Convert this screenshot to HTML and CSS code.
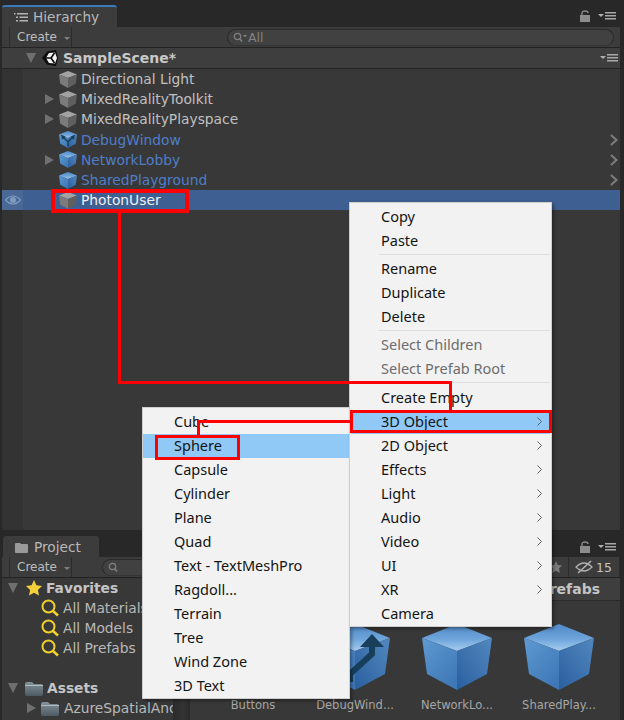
FILE: index.html
```html
<!DOCTYPE html>
<html lang="en">
<head>
<meta charset="utf-8">
<title>Unity Hierarchy context menu</title>
<link rel="stylesheet" href="styles.css">
</head>
<body>
<svg class="defs" aria-hidden="true">
  <defs>
    <linearGradient id="bt" x1="0.5" y1="1" x2="0.5" y2="0"><stop offset="0" stop-color="#a5cdf0"/><stop offset="0.45" stop-color="#6ea4da"/><stop offset="1" stop-color="#4f8ac8"/></linearGradient>
    <linearGradient id="bl" x1="0" y1="0" x2="0.7" y2="1"><stop offset="0" stop-color="#5f9ad3"/><stop offset="1" stop-color="#3f78b6"/></linearGradient>
    <linearGradient id="br" x1="0" y1="1" x2="1" y2="0"><stop offset="0" stop-color="#2a5f9f"/><stop offset="1" stop-color="#5288bf"/></linearGradient>
    <linearGradient id="fd" x1="0" y1="0" x2="0" y2="1"><stop offset="0" stop-color="#84929c"/><stop offset="1" stop-color="#4d5a64"/></linearGradient>
    <symbol id="cube-blue" viewBox="0 0 70 66">
      <polygon points="35,0 70,14 35,27 0,14" fill="url(#bt)"/>
      <polygon points="0,14 35,27 35,66 5,50" fill="url(#bl)"/>
      <polygon points="70,14 35,27 35,66 65,50" fill="url(#br)"/>
    </symbol>
    <symbol id="cube-gray" viewBox="0 0 70 66">
      <polygon points="35,0 70,14 35,27 0,14" fill="#a2a2a2"/>
      <polygon points="0,14 35,27 35,66 5,50" fill="#7b7b7b"/>
      <polygon points="70,14 35,27 35,66 65,50" fill="#5f5f5f"/>
    </symbol>
    <symbol id="folder" viewBox="0 0 18 15">
      <path d="M0 3 Q0 1 2 1 H7 L9 3 H16 Q18 3 18 5 V13 Q18 15 16 15 H2 Q0 15 0 13 Z" fill="url(#fd)"/>
      <path d="M0 4 H18 V5 H0 Z" fill="#b4bcc2"/>
    </symbol>
    <symbol id="mag" viewBox="0 0 18 18">
      <circle cx="7.5" cy="7.5" r="6" fill="none" stroke="#f3cf2a" stroke-width="2"/>
      <path d="M12 12 L17 16.5" stroke="#f3cf2a" stroke-width="2.6"/>
    </symbol>
    <symbol id="menu-icon" viewBox="0 0 18 8">
      <path d="M0 2 H6 L3 5 Z" fill="#b0b0b0"/>
      <path d="M7 0 H18 V1.6 H7 Z M7 3 H18 V4.6 H7 Z M7 6 H18 V7.6 H7 Z" fill="#a8a8a8"/>
    </symbol>
    <symbol id="lock" viewBox="0 0 10 12">
      <path d="M0 5 H10 V12 H0 Z" fill="#8c8c8c"/>
      <path d="M2 5 V3 Q2 1 5 1 Q8 1 8 3" fill="none" stroke="#8c8c8c" stroke-width="1.4"/>
    </symbol>
    <symbol id="chev" viewBox="0 0 8 12">
      <path d="M1 1 L6.5 6 L1 11" fill="none" stroke="#7d7d7d" stroke-width="2"/>
    </symbol>
    <symbol id="sub" viewBox="0 0 5 9">
      <path d="M0.5 0.5 L4.5 4.5 L0.5 8.5" fill="none" stroke="#5f5f5f" stroke-width="1"/>
    </symbol>
  </defs>
</svg>

<div class="app">
  <section class="panel hierarchy">
    <div class="tabbar">
      <div class="tab active">
        <svg class="tab-ic" viewBox="0 0 14 10"><path d="M0 1 H1.5 V2.5 H0 Z M3 1 H14 V2.5 H3 Z M2 4.5 H4 V6 H2 Z M5.5 4.5 H14 V6 H5.5 Z M2 8 H4 V9.5 H2 Z M5.5 8 H14 V9.5 H5.5 Z" fill="#b4b4b4"/></svg>
        Hierarchy
      </div>
      <div class="tab-tools">
        <svg class="ic-lock"><use href="#lock"/></svg>
        <svg class="ic-menu"><use href="#menu-icon"/></svg>
      </div>
    </div>
    <div class="toolbar">
      <div class="create">Create<span class="caret"></span></div>
      <div class="search">
        <svg class="search-ic" viewBox="0 0 14 10"><circle cx="4.5" cy="4.5" r="3.2" fill="none" stroke="#808080" stroke-width="1.3"/><path d="M7 7 L9 9.5" stroke="#808080" stroke-width="1.4"/><path d="M10 3 H14 L12 5.5 Z" fill="#808080"/></svg>
        All
      </div>
    </div>
    <div class="scene-row">
      <span class="tri-down"></span>
      <svg class="unity" viewBox="0 0 16 16"><polygon points="0,8 5,1.5 14,0 16,8 14,16 5,14.5" fill="#0c0c0c"/><polygon points="4,8 7,3 13,2.5 15,8 13,13.5 7,13" fill="#f2f2f2"/><path d="M9 8 H4 M9 8 L12.5 3 M9 8 L12.5 13" stroke="#0c0c0c" stroke-width="1.7" fill="none"/></svg>
      <span class="scene-name">SampleScene*</span>
      <svg class="ic-menu end"><use href="#menu-icon"/></svg>
    </div>
    <ul class="tree">
      <li class="row"><span class="slot"></span><svg class="cube"><use href="#cube-gray"/></svg><span>Directional Light</span></li>
      <li class="row"><span class="slot"><span class="tri-right"></span></span><svg class="cube"><use href="#cube-gray"/></svg><span>MixedRealityToolkit</span></li>
      <li class="row"><span class="slot"><span class="tri-right"></span></span><svg class="cube"><use href="#cube-gray"/></svg><span>MixedRealityPlayspace</span></li>
      <li class="row prefab"><span class="slot"></span><svg class="cube" viewBox="0 0 70 66"><use href="#cube-blue" width="70" height="66"/><path d="M35 60 V42 L54 24 M35 42 L16 24" stroke="#173f5a" stroke-width="6" fill="none"/><polygon points="62,14 58,34 44,22" fill="#173f5a"/><polygon points="8,14 12,34 26,22" fill="#173f5a"/></svg><span>DebugWindow</span><svg class="go"><use href="#chev"/></svg></li>
      <li class="row prefab"><span class="slot"><span class="tri-right"></span></span><svg class="cube"><use href="#cube-blue"/></svg><span>NetworkLobby</span><svg class="go"><use href="#chev"/></svg></li>
      <li class="row prefab"><span class="slot"></span><svg class="cube"><use href="#cube-blue"/></svg><span>SharedPlayground</span><svg class="go"><use href="#chev"/></svg></li>
      <li class="row selected">
        <svg class="eye" viewBox="0 0 16 10"><path d="M0.5 5 Q8 -3 15.5 5 Q8 13 0.5 5 Z" fill="none" stroke="#7f9abf" stroke-width="1.2"/><circle cx="8" cy="5" r="3" fill="#7f9abf"/></svg>
        <span class="slot"></span><svg class="cube"><use href="#cube-gray"/></svg><span>PhotonUser</span>
      </li>
    </ul>
  </section>

  <section class="panel project">
    <div class="tabbar short">
      <div class="tab">
        <svg class="tab-folder" viewBox="0 0 13 11"><path d="M0 2 Q0 1 1 1 H5 L6 2 H12 Q13 2 13 3 V10 Q13 11 12 11 H1 Q0 11 0 10 Z" fill="#9a9a9a"/></svg>
        Project
      </div>
      <div class="tab-tools">
        <svg class="ic-lock"><use href="#lock"/></svg>
        <svg class="ic-menu"><use href="#menu-icon"/></svg>
      </div>
    </div>
    <div class="toolbar project-bar">
      <div class="create">Create<span class="caret"></span></div>
      <div class="search short-search">
        <svg class="search-ic" viewBox="0 0 14 10"><circle cx="4.5" cy="4.5" r="3.2" fill="none" stroke="#808080" stroke-width="1.3"/><path d="M7 7 L9 9.5" stroke="#808080" stroke-width="1.4"/></svg>
      </div>
      <div class="filters">
        <svg class="star-btn" viewBox="0 0 12 12"><polygon points="6,0 7.8,4 12,4.5 9,7.4 9.8,12 6,9.8 2.2,12 3,7.4 0,4.5 4.2,4" fill="#7b7b7b"/></svg>
        <div class="hidden-count">
          <svg class="eye-off" viewBox="0 0 18 14"><path d="M1 7 Q9 -1 17 7 Q9 15 1 7 Z" fill="none" stroke="#b0b0b0" stroke-width="1.3"/><path d="M3 13 L16 1" stroke="#b0b0b0" stroke-width="1.6"/></svg>
          15
        </div>
      </div>
    </div>
    <div class="project-body">
      <div class="sidebar">
        <div class="side-row bold l0"><span class="tri-down small"></span><svg class="star" viewBox="0 0 16 16"><polygon points="8,0 10.4,5.3 16,6 11.9,9.9 13,15.6 8,12.8 3,15.6 4.1,9.9 0,6 5.6,5.3" fill="#f5cf3a"/></svg><span>Favorites</span></div>
        <div class="side-row l1"><svg class="mag"><use href="#mag"/></svg><span>All Materials</span></div>
        <div class="side-row l1"><svg class="mag"><use href="#mag"/></svg><span>All Models</span></div>
        <div class="side-row l1"><svg class="mag"><use href="#mag"/></svg><span>All Prefabs</span></div>
        <div class="side-row spacer"></div>
        <div class="side-row bold l0"><span class="tri-down small"></span><svg class="fold"><use href="#folder"/></svg><span>Assets</span></div>
        <div class="side-row l2"><span class="tri-right"></span><svg class="fold"><use href="#folder"/></svg><span>AzureSpatialAnchors</span></div>
      </div>
      <div class="splitter"></div>
      <div class="content">
        <div class="crumb">Prefabs</div>
        <div class="grid">
          <div class="asset"><div class="thumb"></div><span>Buttons</span></div>
          <div class="asset">
            <svg class="thumb" viewBox="0 0 70 66"><use href="#cube-blue" width="70" height="66"/><path d="M30 58 V50 L52 30 V20" fill="none" stroke="#173f5a" stroke-width="6"/><polygon points="52,10 64,23 40,23" fill="#173f5a"/></svg>
            <span>DebugWind...</span>
          </div>
          <div class="asset"><svg class="thumb"><use href="#cube-blue"/></svg><span>NetworkLo...</span></div>
          <div class="asset"><svg class="thumb"><use href="#cube-blue"/></svg><span>SharedPlay...</span></div>
        </div>
      </div>
    </div>
  </section>
</div>

<nav class="menu submenu">
  <div class="item">Cube</div>
  <div class="item on">Sphere</div>
  <div class="item">Capsule</div>
  <div class="item">Cylinder</div>
  <div class="item">Plane</div>
  <div class="item">Quad</div>
  <div class="item">Text - TextMeshPro</div>
  <div class="item">Ragdoll...</div>
  <div class="item">Terrain</div>
  <div class="item">Tree</div>
  <div class="item">Wind Zone</div>
  <div class="item">3D Text</div>
</nav>

<nav class="menu context">
  <div class="item">Copy</div>
  <div class="item">Paste</div>
  <div class="sep"></div>
  <div class="item">Rename</div>
  <div class="item">Duplicate</div>
  <div class="item">Delete</div>
  <div class="sep"></div>
  <div class="item off">Select Children</div>
  <div class="item off">Select Prefab Root</div>
  <div class="sep wide"></div>
  <div class="item">Create Empty</div>
  <div class="item on">3D Object<svg class="sub"><use href="#sub"/></svg></div>
  <div class="item">2D Object<svg class="sub"><use href="#sub"/></svg></div>
  <div class="item">Effects<svg class="sub"><use href="#sub"/></svg></div>
  <div class="item">Light<svg class="sub"><use href="#sub"/></svg></div>
  <div class="item">Audio<svg class="sub"><use href="#sub"/></svg></div>
  <div class="item">Video<svg class="sub"><use href="#sub"/></svg></div>
  <div class="item">UI<svg class="sub"><use href="#sub"/></svg></div>
  <div class="item">XR<svg class="sub"><use href="#sub"/></svg></div>
  <div class="item">Camera</div>
</nav>

<svg class="callouts" viewBox="0 0 624 720" aria-hidden="true">
  <g fill="none" stroke="#ff0000" stroke-width="3">
    <rect x="53" y="191" width="134" height="20" stroke-width="4"/>
    <path d="M119.5 213 V382.5 H450.5 V410"/>
    <rect x="351.5" y="411.5" width="199" height="20"/>
    <path d="M352 421.5 H198.5 V436"/>
    <rect x="156.5" y="436.5" width="82" height="22"/>
  </g>
</svg>
</body>
</html>
```

FILE: styles.css
```css
* { box-sizing: border-box; }
html, body { margin: 0; padding: 0; }
body {
  width: 624px;
  height: 720px;
  overflow: hidden;
  position: relative;
  background: #282828;
  font-family: "DejaVu Sans", sans-serif;
  font-size: 13.8px;
  color: #bdbdbd;
}
.defs { position: absolute; width: 0; height: 0; }
.app { display: flex; flex-direction: column; padding-left: 2px; height: 720px; width: 620px; }
.panel { display: flex; flex-direction: column; }
.hierarchy { height: 530px; background: #383838; }
.project { flex: 1; min-height: 0; }

.tabbar { height: 27px; flex: none; background: #282828; display: flex; align-items: flex-end; justify-content: space-between; padding-top: 5px; }
.tabbar.short { height: 27px; padding-top: 6px; }
.tab { height: 100%; width: 115px; background: #3c3c3c; display: flex; align-items: center; gap: 5px; padding-left: 12px; font-size: 13.7px; color: #b8b8b8; border-radius: 3px 3px 0 0; padding-top: 1px; }
.tab.active { border-top: 2px solid #3a78b8; width: 115px; padding-top: 0; }
.project .tab { width: 96px; padding-left: 12px; margin-left: 1px; gap: 6px; }
.tab-ic { width: 14px; height: 10px; }
.tab-folder { width: 13px; height: 11px; }
.tab-tools { display: flex; align-items: center; gap: 8px; padding-right: 4px; height: 100%; }
.ic-lock { width: 10px; height: 12px; }
.ic-menu { width: 18px; height: 8px; }

.toolbar { height: 21px; flex: none; background: #3c3c3c; border-bottom: 1px solid #232323; display: flex; align-items: center; padding-left: 7px; padding-right: 6px; }
.create { height: 20px; width: 63px; border-left: 1px solid #2c2c2c; border-right: 1px solid #2c2c2c; display: flex; align-items: center; padding-left: 7px; gap: 7px; font-size: 12px; color: #bdbdbd; }
.caret { width: 0; height: 0; border: 3px solid transparent; border-top: 3px solid #808080; border-bottom: 0; margin-top: 2px; }
.search { flex: 1; height: 17px; margin-left: 155px; border-radius: 9px; background: #414141; border: 1px solid #2a2a2a; border-bottom-color: #333; display: flex; align-items: center; gap: 1px; padding-left: 5px; font-size: 12.5px; color: #828282; }
.search-ic { width: 14px; height: 10px; }

.scene-row { height: 21px; flex: none; background: #3e3e3e; border-bottom: 1px solid #232323; display: flex; align-items: center; position: relative; padding-left: 24px; }
.tri-down { width: 0; height: 0; border-left: 5px solid transparent; border-right: 5px solid transparent; border-top: 10px solid #6f6f6f; }
.tri-down.small { border-left-width: 5px; border-right-width: 5px; border-top-width: 10px; }
.unity { width: 16px; height: 16px; margin-left: 6px; }
.scene-name { font-weight: 700; margin-left: 5px; color: #c8c8c8; font-size: 14px; }
.scene-row .end { margin-left: auto; margin-right: 2px; }

.tree { list-style: none; margin: 0; padding: 0; flex: 1; background: linear-gradient(to right, #333 21px, #383838 21px); }
.row { height: 20.2px; display: flex; align-items: center; padding-left: 43px; position: relative; color: #c0c0c0; }
.slot { width: 14px; flex: none; display: flex; align-items: center; }
.tri-right { width: 0; height: 0; border-top: 5px solid transparent; border-bottom: 5px solid transparent; border-left: 9px solid #707070; }
.cube { width: 18px; height: 17px; margin-right: 4px; flex: none; }
.prefab { color: #4f7ec8; }
.go { width: 8px; height: 12px; position: absolute; right: 2px; top: 4px; }
.selected { background: linear-gradient(to right, #4a6896 21px, #3e5f91 21px); color: #f0f0f0; }
.eye { position: absolute; left: 3px; top: 5px; width: 16px; height: 10px; }

.project-bar { padding-right: 0; }
.short-search { flex: none; width: 72px; margin-left: 30px; margin-right: auto; }
.filters { display: flex; align-items: center; height: 100%; }
.star-btn { width: 12px; height: 12px; margin-right: 6px; }
.hidden-count { width: 52px; height: 20px; display: flex; align-items: center; gap: 3px; padding-left: 6px; font-size: 12.5px; color: #c4c4c4; border-left: 1px solid #2c2c2c; border-right: 1px solid #2c2c2c; }
.eye-off { width: 18px; height: 14px; }

.project-body { flex: 1; min-height: 0; display: flex; overflow: hidden; }
.sidebar { width: 171px; flex: none; background: #383838; overflow: hidden; }
.side-row { height: 20px; display: flex; align-items: center; white-space: nowrap; color: #b8b8b8; }
.side-row.bold { font-weight: 700; color: #c4c4c4; }
.side-row.l0 { padding-left: 6px; }
.side-row.l1 { padding-left: 39px; }
.side-row.l2 { padding-left: 25px; }
.star { width: 16px; height: 16px; margin: 0 4px 0 8px; }
.mag { width: 18px; height: 18px; margin-right: 4px; flex: none; }
.fold { width: 18px; height: 15px; margin: 0 4px 0 7px; flex: none; }
.side-row.l2 .fold { margin: 0 5px 0 5px; }
.splitter { width: 17px; flex: none; background: linear-gradient(to right, #2b2b2b, #333 60%, #2b2b2b); }
.content { flex: 1; background: #383838; display: flex; flex-direction: column; min-width: 0; }
.crumb { height: 23px; flex: none; background: #3e3e3e; border-bottom: 1px solid #2a2a2a; text-align: right; padding-right: 20px; font-weight: 700; font-size: 14px; line-height: 22px; color: #c4c4c4; }
.grid { display: flex; padding-left: 12px; padding-top: 23px; }
.asset { width: 102px; flex: none; display: flex; flex-direction: column; align-items: center; font-size: 11.5px; color: #a6a6a6; }
.thumb { width: 70px; height: 66px; flex: none; }
.asset span { margin-top: 8px; white-space: nowrap; }

.menu { position: absolute; background: #f2f2f2; border: 1px solid #cfcfcf; box-shadow: 2px 2px 3px rgba(0,0,0,.35); font-family: "Noto Sans", sans-serif; font-size: 14.5px; color: #141414; }
.context { left: 349px; top: 202px; width: 203px; height: 425px; padding: 2px 1px; }
.submenu { left: 142px; top: 407px; width: 208px; height: 292px; padding: 2px 0; }
.item { height: 24px; line-height: 23px; position: relative; padding-left: 31px; white-space: nowrap; }
.context .item { padding-left: 30px; }
.item.on { background: #90c8f6; }
.item.off { color: #6d6d6d; }
.sep { height: 4px; margin-left: 28px; background: linear-gradient(#f2f2f2 1px, #dedede 1px, #dedede 2px, #f2f2f2 2px); }
.sep.wide { height: 5px; }
.sub { width: 5px; height: 9px; position: absolute; right: 8px; top: 7px; }

.callouts { position: absolute; left: 0; top: 0; width: 624px; height: 720px; pointer-events: none; }
```
